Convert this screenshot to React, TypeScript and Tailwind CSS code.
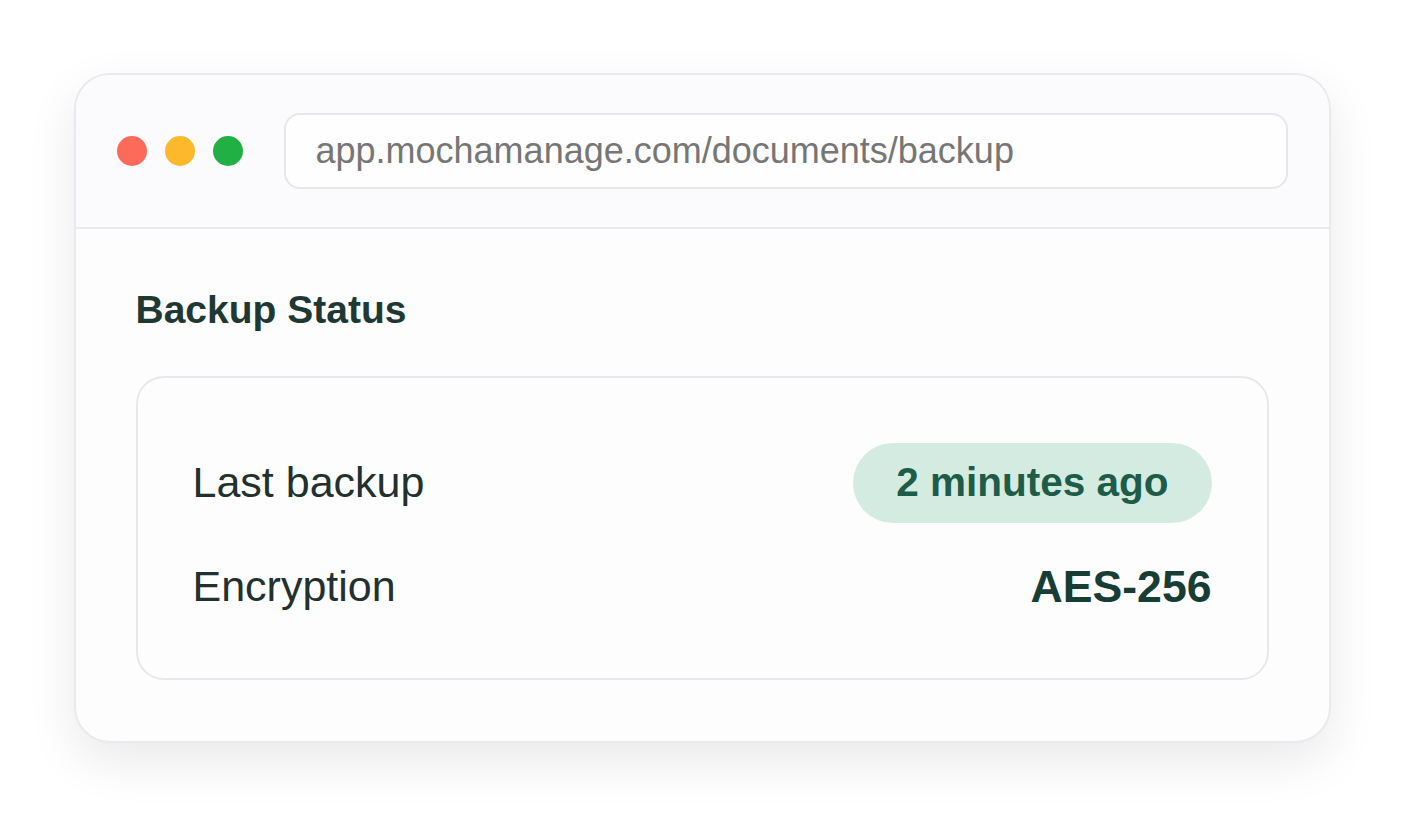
import React from 'react';

const rows = [
  { label: 'Last backup', value: '2 minutes ago', pill: true },
  { label: 'Encryption', value: 'AES-256', pill: false },
];

export default function App() {
  return (
    <div
      className="w-full h-[816px] bg-white flex items-center justify-center"
      style={{ fontFamily: '"Liberation Sans", Arial, sans-serif' }}
    >
      {/* Browser window */}
      <div className="w-[1257px] h-[670px] rounded-[36px] border-2 border-[#ebe9ed] bg-[#fdfdfd] overflow-hidden flex flex-col shadow-[0_18px_50px_rgba(0,0,0,0.09)]">
        {/* Title bar */}
        <div className="h-[154px] shrink-0 bg-[#fbfafc] border-b-2 border-[#ebe9ed] flex items-center px-[41px] gap-[41px]">
          <div className="flex items-center gap-[18px]">
            <span className="w-[30px] h-[30px] rounded-full bg-[#fe6a59]" />
            <span className="w-[30px] h-[30px] rounded-full bg-[#feb82c]" />
            <span className="w-[30px] h-[30px] rounded-full bg-[#21b043]" />
          </div>
          <div className="flex-1 h-[76px] rounded-[16px] border-2 border-[#e8e6ea] bg-[#fefefe] flex items-center px-[30px]">
            <span className="text-[36px] text-[#767676] leading-none">
              app.mochamanage.com/documents/backup
            </span>
          </div>
        </div>

        {/* Body */}
        <div className="flex-1 px-[60px] pt-[58px]">
          <h2 className="text-[39px] font-bold leading-[1.2] text-[#1e3934]">Backup Status</h2>
          <div className="mt-[42px] rounded-[28px] border-2 border-[#e9e7eb] bg-[#fdfdfe] px-[55px] py-[65px] flex flex-col gap-[37px]">
            {rows.map((row) => (
              <div key={row.label} className="flex items-center justify-between">
                <span className="text-[43px] leading-[1.2] text-[#22302e]">{row.label}</span>
                {row.pill ? (
                  <span className="h-[80px] px-[43px] rounded-full bg-[#d4ebe2] flex items-center text-[40.5px] font-bold text-[#1d5c48]">
                    {row.value}
                  </span>
                ) : (
                  <span className="text-[44.6px] leading-[1.2] font-bold text-[#173d35]">{row.value}</span>
                )}
              </div>
            ))}
          </div>
        </div>
      </div>
    </div>
  );
}
